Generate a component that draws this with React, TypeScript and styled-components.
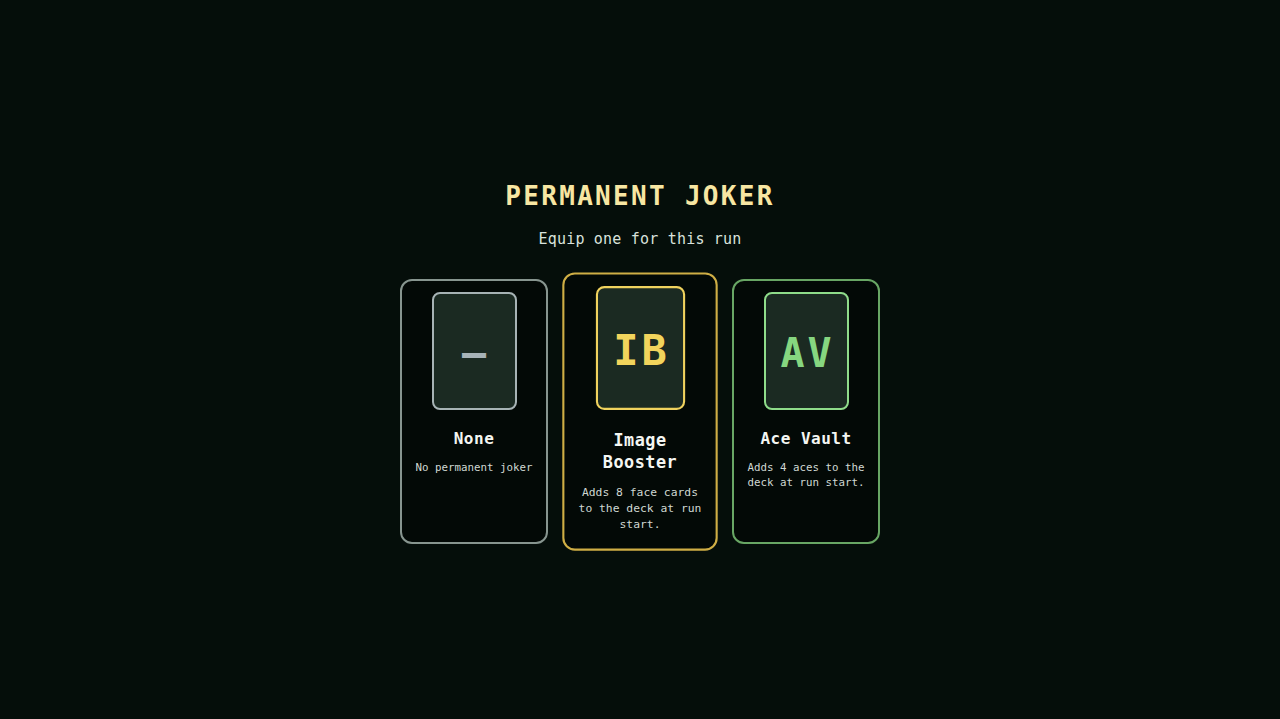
import styled, { createGlobalStyle } from 'styled-components';

type Tone = 'gray' | 'gold' | 'green';

const tones: Record<Tone, { frame: string; art: string; glyph: string }> = {
  gray: { frame: '#87958f', art: '#a7b3b5', glyph: '#a7b3b8' },
  gold: { frame: '#cfae45', art: '#f0d25e', glyph: '#f2d45c' },
  green: { frame: '#68a664', art: '#8fdc8a', glyph: '#86d680' },
};

const jokers: { id: string; tone: Tone; glyph: string; name: string; desc: string; selected?: boolean }[] = [
  { id: 'none', tone: 'gray', glyph: '—', name: 'None', desc: 'No permanent joker' },
  {
    id: 'image-booster',
    tone: 'gold',
    glyph: 'IB',
    name: 'Image Booster',
    desc: 'Adds 8 face cards to the deck at run start.',
    selected: true,
  },
  { id: 'ace-vault', tone: 'green', glyph: 'AV', name: 'Ace Vault', desc: 'Adds 4 aces to the deck at run start.' },
];

const GlobalStyle = createGlobalStyle`
  html, body {
    margin: 0;
    padding: 0;
    background: #050e0a;
  }
  body {
    font-family: 'DejaVu Sans Mono', 'Liberation Mono', monospace;
  }
`;

const Screen = styled.main`
  min-height: 100vh;
  display: flex;
  flex-direction: column;
  align-items: center;
  justify-content: center;
  box-sizing: border-box;
  padding-top: 4px;
`;

const Title = styled.h1`
  margin: 0;
  font-size: 26px;
  line-height: 32px;
  font-weight: 700;
  letter-spacing: 2.3px;
  color: #f7e6a2;
`;

const Subtitle = styled.p`
  margin: 17px 0 0;
  font-size: 15px;
  line-height: 20px;
  letter-spacing: 0.2px;
  color: #d9e2dc;
`;

const Row = styled.div`
  display: flex;
  gap: 18px;
  margin-top: 30px;
  align-items: flex-start;
`;

const Card = styled.button<{ $tone: Tone; $selected?: boolean }>`
  width: 148px;
  height: 265px;
  box-sizing: border-box;
  padding: 11px 10px;
  display: flex;
  flex-direction: column;
  align-items: center;
  background: #030906;
  border: 2px solid ${p => tones[p.$tone].frame};
  border-radius: 12px;
  font-family: inherit;
  cursor: pointer;
  transform: ${p => (p.$selected ? 'scale(1.05)' : 'none')};
`;

const Art = styled.div<{ $tone: Tone }>`
  width: 85px;
  height: 118px;
  box-sizing: border-box;
  display: flex;
  align-items: center;
  justify-content: center;
  background: #1b2a22;
  border: 2px solid ${p => tones[p.$tone].art};
  border-radius: 8px;
  color: ${p => tones[p.$tone].glyph};
  font-size: 40px;
  font-weight: 700;
  letter-spacing: 3px;
  padding: 4px 0 0 3px;
`;

const Name = styled.div`
  margin-top: 18px;
  font-size: 16px;
  line-height: 21px;
  font-weight: 700;
  letter-spacing: 0.5px;
  color: #f4f6f2;
  text-align: center;
`;

const Desc = styled.div`
  margin-top: 11px;
  font-size: 10.8px;
  line-height: 15px;
  color: #cfd8d2;
  text-align: center;
`;

export default function App() {
  return (
    <>
      <GlobalStyle />
      <Screen>
        <Title>PERMANENT JOKER</Title>
        <Subtitle>Equip one for this run</Subtitle>
        <Row>
          {jokers.map(j => (
            <Card key={j.id} $tone={j.tone} $selected={j.selected}>
              <Art $tone={j.tone}>{j.glyph}</Art>
              <Name>{j.name}</Name>
              <Desc>{j.desc}</Desc>
            </Card>
          ))}
        </Row>
      </Screen>
    </>
  );
}
